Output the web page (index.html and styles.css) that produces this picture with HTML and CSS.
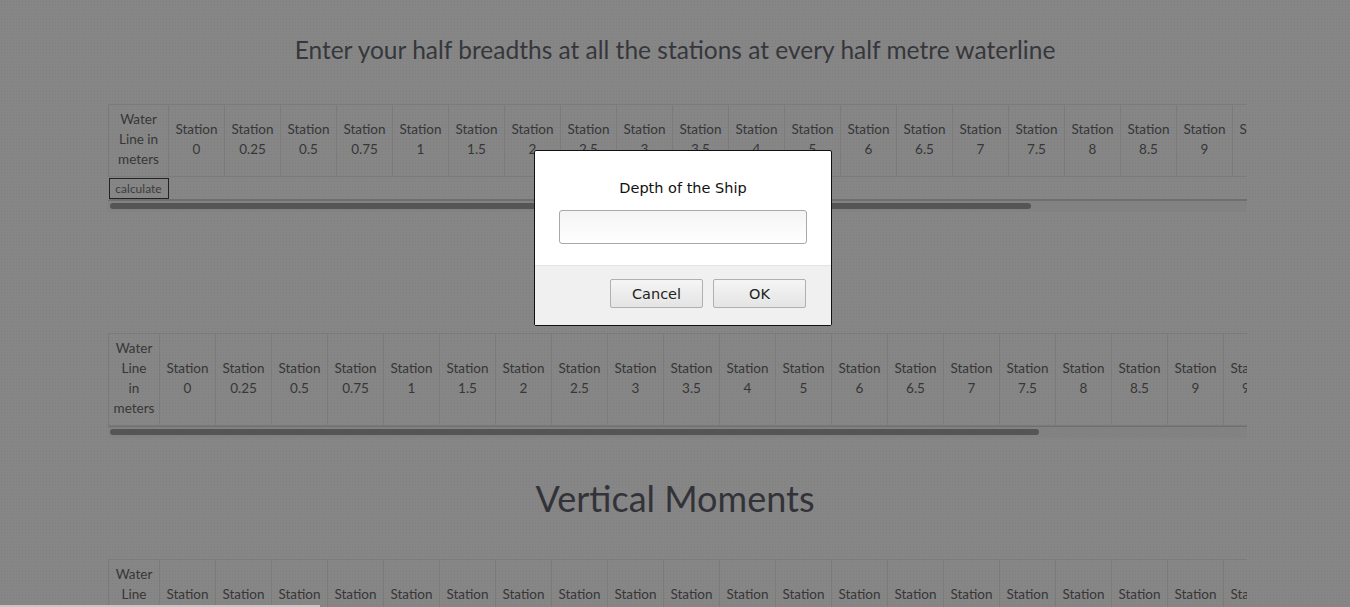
FILE: index.html
```html
<!DOCTYPE html>
<html>
<head>
<meta charset="utf-8">
<link rel="stylesheet" href="styles.css">
</head>
<body>
<div class="page">
  <h2 class="title">Enter your half breadths at all the stations at every half metre waterline</h2>

  <div class="scroll">
    <table class="grid g1">
      <tr>
        <td class="wl">Water Line in meters</td>
        <td>Station 0</td><td>Station 0.25</td><td>Station 0.5</td><td>Station 0.75</td>
        <td>Station 1</td><td>Station 1.5</td><td>Station 2</td><td>Station 2.5</td>
        <td>Station 3</td><td>Station 3.5</td><td>Station 4</td><td>Station 5</td>
        <td>Station 6</td><td>Station 6.5</td><td>Station 7</td><td>Station 7.5</td>
        <td>Station 8</td><td>Station 8.5</td><td>Station 9</td><td>Station 9.5</td>
        <td>Station 10</td>
      </tr>
      <tr class="calc-row">
        <td colspan="22" class="calc-cell"><button class="calc">calculate</button></td>
      </tr>
    </table>
  </div>
  <div class="bar"><div class="thumb t1"></div></div>

  <div class="scroll s2">
    <table class="grid g2">
      <tr>
        <td class="wl">Water Line in meters</td>
        <td>Station 0</td><td>Station 0.25</td><td>Station 0.5</td><td>Station 0.75</td>
        <td>Station 1</td><td>Station 1.5</td><td>Station 2</td><td>Station 2.5</td>
        <td>Station 3</td><td>Station 3.5</td><td>Station 4</td><td>Station 5</td>
        <td>Station 6</td><td>Station 6.5</td><td>Station 7</td><td>Station 7.5</td>
        <td>Station 8</td><td>Station 8.5</td><td>Station 9</td><td>Station 9.5</td>
        <td>Station 10</td>
      </tr>
    </table>
  </div>
  <div class="bar"><div class="thumb t2"></div></div>

  <h1 class="big">Vertical Moments</h1>

  <div class="scroll s3">
    <table class="grid g2">
      <tr>
        <td class="wl">Water Line in meters</td>
        <td>Station 0</td><td>Station 0.25</td><td>Station 0.5</td><td>Station 0.75</td>
        <td>Station 1</td><td>Station 1.5</td><td>Station 2</td><td>Station 2.5</td>
        <td>Station 3</td><td>Station 3.5</td><td>Station 4</td><td>Station 5</td>
        <td>Station 6</td><td>Station 6.5</td><td>Station 7</td><td>Station 7.5</td>
        <td>Station 8</td><td>Station 8.5</td><td>Station 9</td><td>Station 9.5</td>
        <td>Station 10</td>
      </tr>
    </table>
  </div>
</div>

<div class="bottom-strip"></div>

<div class="dialog">
  <div class="dlg-body">
    <div class="dlg-title">Depth of the Ship</div>
    <input class="dlg-input" type="text">
  </div>
  <div class="dlg-foot">
    <button class="dlg-btn">Cancel</button>
    <button class="dlg-btn">OK</button>
  </div>
</div>
</body>
</html>
```

FILE: styles.css
```css
html, body {
  margin: 0;
  padding: 0;
  height: 100%;
  overflow: hidden;
}
body {
  background-color: #868686;
  background-image: radial-gradient(rgba(0,0,0,0.05) 0.6px, transparent 0.8px);
  background-size: 3px 3px;
  font-family: "Lato", "DejaVu Sans", sans-serif;
  color: #3b3b3b;
}
.page {
  width: 1139px;
  margin-left: 108px;
}
.title {
  margin: 0;
  padding-top: 35px;
  height: 104px;
  box-sizing: border-box;
  text-align: center;
  font-family: "Lato", sans-serif;
  font-weight: 400;
  font-size: 24.5px;
  line-height: 30px;
  color: #36373c;
  margin-left: -108px;
  margin-right: -103px;
}
.scroll {
  overflow: hidden;
  width: 1139px;
}
.grid {
  border-collapse: collapse;
  table-layout: fixed;
}
.grid td {
  border: 1px solid #7b7b7b;
  width: 56px;
  min-width: 56px;
  box-sizing: border-box;
  text-align: center;
  font-size: 13.5px;
  line-height: 20px;
  padding: 3px 1px 7px;
  color: #363636;
  vertical-align: middle;
}
.g1 td.wl {
  width: 60px;
  min-width: 60px;
}
.g1 tr:first-child td {
  height: 72px;
}
.g1 .calc-row td {
  border: none;
  padding: 0;
  text-align: left;
  height: 23px;
  border-bottom: 1px solid #6e6e6e;
}
.calc {
  font-family: "Lato", sans-serif;
  font-size: 12px;
  color: #3c3c3c;
  background: transparent;
  border: 1px solid #222;
  width: 60px;
  height: 21px;
  padding: 0;
  display: block;
  margin-top: 1px;
}
.bar {
  width: 1139px;
  height: 12px;
  background: #828282;
  border-top: 1px solid #6f6f6f;
  box-sizing: border-box;
  position: relative;
}
.thumb {
  height: 6px;
  margin-top: 2px;
  margin-left: 2px;
  border-radius: 3px;
  background: #555;
}
.t1 { width: 921px; }
.t2 { width: 929px; }
.s2 {
  margin-top: 121px;
}
.g2 td.wl {
  width: 51px;
  min-width: 51px;
  max-width: 51px;
  padding: 3px 0 7px;
  word-spacing: 40px;
}
.g2 tr:first-child td {
  height: 92px;
}
.big {
  margin: 0;
  text-align: center;
  font-family: "Lato", sans-serif;
  font-weight: 400;
  font-size: 36px;
  line-height: 40px;
  color: #323338;
  padding-top: 40px;
  height: 121px;
  box-sizing: border-box;
  margin-left: -108px;
  margin-right: -103px;
}
.bottom-strip {
  position: fixed;
  left: 0;
  bottom: 0;
  width: 320px;
  height: 2px;
  background: #c6c6c6;
}
.dialog {
  position: fixed;
  left: 534px;
  top: 150px;
  width: 298px;
  height: 176px;
  box-sizing: border-box;
  border: 1px solid #111;
  border-radius: 2px;
  background: #fff;
  font-family: "DejaVu Sans", sans-serif;
  overflow: hidden;
  display: flex;
  flex-direction: column;
}
.dlg-body {
  height: 114px;
  padding-top: 28px;
  box-sizing: border-box;
  display: flex;
  flex-direction: column;
  align-items: center;
}
.dlg-title {
  font-size: 14.5px;
  line-height: 18px;
  color: #111;
}
.dlg-input {
  margin-top: 13px;
  width: 248px;
  height: 34px;
  box-sizing: border-box;
  border: 1px solid #a8a8a8;
  border-radius: 3px;
  background: linear-gradient(#f4f4f4, #fff);
  outline: none;
}
.dlg-foot {
  flex: 1;
  background: #f0f0f0;
  border-top: 1px solid #e4e4e4;
  display: flex;
  justify-content: flex-end;
  align-items: flex-start;
  padding-top: 13px;
  padding-right: 25px;
  gap: 10px;
}
.dlg-btn {
  width: 93px;
  height: 29px;
  box-sizing: border-box;
  border: 1px solid #b0b0b0;
  border-radius: 2px;
  background: linear-gradient(#f5f5f5, #e4e4e4);
  font-family: "DejaVu Sans", sans-serif;
  font-size: 14.5px;
  color: #222;
  padding: 0;
}
```
